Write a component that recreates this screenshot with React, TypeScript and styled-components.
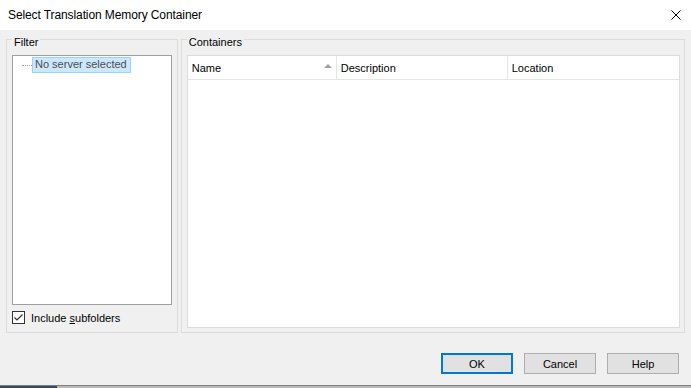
import React from "react";
import styled, { createGlobalStyle } from "styled-components";

const GlobalStyle = createGlobalStyle`
  html, body { margin: 0; padding: 0; background: #f0f0f0; }
  body { font-family: "Liberation Sans", Arial, sans-serif; font-size: 11px; color: #000; }
  * { box-sizing: border-box; }
`;

const Window = styled.div`
  width: 691px;
  height: 388px;
  display: flex;
  flex-direction: column;
  overflow: hidden;
`;

const TitleBar = styled.div`
  height: 30px;
  background: #ffffff;
  display: flex;
  align-items: center;
  justify-content: space-between;
  padding-left: 8px;
  padding-right: 9px;
  flex-shrink: 0;
`;

const Title = styled.div`
  font-family: "Liberation Sans", Arial, sans-serif;
  font-size: 12px;
  letter-spacing: -0.1px;
  color: #000;
  padding-bottom: 1px;
`;

const CloseBox = styled.div`
  width: 10px;
  height: 10px;
  display: flex;
  margin-right: 1px;
  margin-bottom: 1px;
`;

const Body = styled.div`
  flex: 1;
  background: #f0f0f0;
  display: flex;
  flex-direction: column;
`;

const Groups = styled.div`
  display: flex;
  gap: 3px;
  padding: 0 6px;
`;

const GroupBox = styled.fieldset<{ $w: number }>`
  margin: 0;
  width: ${(p) => p.$w}px;
  height: 303px;
  min-width: 0;
  border: 1px solid #dcdcdc;
  padding: 6px 5px 0 5px;
  display: flex;
  flex-direction: column;
`;

const Legend = styled.legend`
  font-size: 11px;
  line-height: 13px;
  padding: 6px 2px 0 2px;
  color: #000;
`;

const TreeBox = styled.div`
  width: 160px;
  height: 250px;
  background: #fff;
  border: 1px solid #a0a0a0;
  padding: 1px 0 0 9px;
`;

const TreeRow = styled.div`
  display: flex;
  align-items: center;
`;

const Dots = styled.div`
  width: 10px;
  height: 1px;
  border-top: 1px dotted #a0a0a0;
`;

const Selected = styled.div`
  background: #cce8ff;
  border: 1px solid #99d1ff;
  color: #4d4d4d;
  font-size: 11px;
  line-height: 13px;
  padding: 0 2px 0 2px;
  height: 16px;
  width: 99px;
`;

const CheckRow = styled.label`
  display: flex;
  align-items: center;
  gap: 6px;
  margin-top: 6px;
  font-size: 11px;
`;

const CheckBox = styled.span`
  width: 13px;
  height: 13px;
  border: 1px solid #333;
  background: #fff;
  display: flex;
  align-items: center;
  justify-content: center;
`;

const Underline = styled.span`
  text-decoration: underline;
`;

const ListView = styled.div`
  width: 493px;
  height: 273px;
  background: #fff;
  border: 1px solid #dcdcdc;
`;

const Header = styled.div`
  display: flex;
  height: 24px;
  border-bottom: 1px solid #e5e5e5;
`;

const HeaderCell = styled.div<{ $w?: number }>`
  ${(p) => (p.$w ? `width: ${p.$w}px;` : "flex: 1;")}
  border-right: ${(p) => (p.$w ? "1px solid #e5e5e5" : "none")};
  padding-left: 4px;
  padding-right: 3px;
  display: flex;
  align-items: center;
  justify-content: space-between;
  font-size: 11px;
  color: #000;
`;

const SortArrow = styled.span`
  width: 0;
  height: 0;
  border-left: 4px solid transparent;
  border-right: 4px solid transparent;
  border-bottom: 4px solid #a0a0a0;
  margin-right: 1px;
  margin-bottom: 3px;
`;

const ButtonRow = styled.div`
  display: flex;
  justify-content: flex-end;
  gap: 11px;
  padding-right: 12px;
  margin-top: 20px;
`;

const Button = styled.button<{ $default?: boolean }>`
  width: 72px;
  height: 21px;
  background: #e1e1e1;
  border: ${(p) => (p.$default ? "2px solid #0078d7" : "1px solid #adadad")};
  font-family: "Liberation Sans", Arial, sans-serif;
  font-size: 11px;
  color: #000;
  padding: 0;
  display: flex;
  align-items: center;
  justify-content: center;
`;

const BottomEdge = styled.div`
  height: 3px;
  background: #b9b9b9;
  border-top: 1px solid #7f7f7f;
  display: flex;
  flex-shrink: 0;
`;

const TaskSeg = styled.div`
  width: 57px;
  background: #34495e;
`;

export default function App() {
  return (
    <>
      <GlobalStyle />
      <Window>
        <TitleBar>
          <Title>Select Translation Memory Container</Title>
          <CloseBox>
            <svg width="10" height="10" viewBox="0 0 10 10">
              <path d="M0.5 0.5 L9.5 9.5 M9.5 0.5 L0.5 9.5" stroke="#000" strokeWidth="1" />
            </svg>
          </CloseBox>
        </TitleBar>
        <Body>
          <Groups>
            <GroupBox $w={172}>
              <Legend>Filter</Legend>
              <TreeBox>
                <TreeRow>
                  <Dots />
                  <Selected>No server selected</Selected>
                </TreeRow>
              </TreeBox>
              <CheckRow>
                <CheckBox>
                  <svg width="11" height="11" viewBox="0 0 11 11">
                    <path d="M1.5 5.5 L4 8 L9.5 2.5" stroke="#333" strokeWidth="1.2" fill="none" />
                  </svg>
                </CheckBox>
                <span>
                  Include <Underline>s</Underline>ubfolders
                </span>
              </CheckRow>
            </GroupBox>
            <GroupBox $w={505}>
              <Legend>Containers</Legend>
              <ListView>
                <Header>
                  <HeaderCell $w={149}>
                    <span>Name</span>
                    <SortArrow />
                  </HeaderCell>
                  <HeaderCell $w={171}>
                    <span>Description</span>
                  </HeaderCell>
                  <HeaderCell>
                    <span>Location</span>
                  </HeaderCell>
                </Header>
              </ListView>
            </GroupBox>
          </Groups>
          <ButtonRow>
            <Button $default>OK</Button>
            <Button>Cancel</Button>
            <Button>Help</Button>
          </ButtonRow>
        </Body>
        <BottomEdge>
          <TaskSeg />
        </BottomEdge>
      </Window>
    </>
  );
}
